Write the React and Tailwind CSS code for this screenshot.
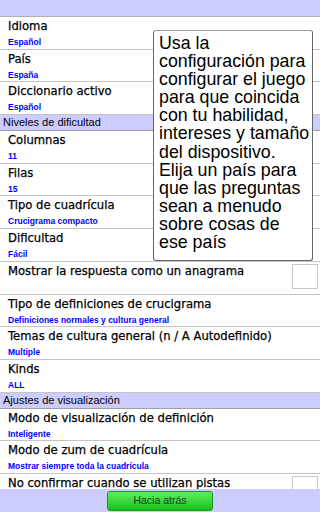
import React from "react";

const rowsA = [
  { t: "Idioma", s: "Español" },
  { t: "País", s: "España" },
  { t: "Diccionario activo", s: "Español" },
];
const rowsB = [
  { t: "Columnas", s: "11" },
  { t: "Filas", s: "15" },
  { t: "Tipo de cuadrícula", s: "Crucigrama compacto" },
  { t: "Dificultad", s: "Fácil" },
  { t: "Mostrar la respuesta como un anagrama", c: true },
  { t: "Tipo de definiciones de crucigrama", s: "Definiciones normales y cultura general" },
  { t: "Temas de cultura general (n / A Autodefinido)", s: "Multiple" },
  { t: "Kinds", s: "ALL" },
];
const rowsC = [
  { t: "Modo de visualización de definición", s: "Inteligente" },
  { t: "Modo de zum de cuadrícula", s: "Mostrar siempre toda la cuadrícula" },
  { t: "No confirmar cuando se utilizan pistas", c: true },
];

function Row({ r }) {
  return (
    <div className="h-[32.7px] shrink-0 border-b border-[#c4c4c4] bg-white flex justify-between">
      <div className="pl-2 pt-[3px]">
        <div
          className="text-[11.6px] leading-[13px] text-black whitespace-nowrap [-webkit-text-stroke:0.25px_#000]"
          style={{ fontFamily: '"DejaVu Sans", sans-serif' }}
        >
          {r.t}
        </div>
        {r.s && (
          <div className="mt-[4px] text-[8.5px] leading-[10px] font-bold text-[#0000ff] whitespace-nowrap">{r.s}</div>
        )}
      </div>
      {r.c && <div className="mt-[2px] mr-[2px] w-[26px] h-[25px] border border-[#c8c8c8] bg-white shrink-0" />}
    </div>
  );
}

function Header({ t }) {
  return (
    <div className="h-[16px] shrink-0 border-b border-[#a0a0a0] bg-[#ccccff] pl-[3px] text-[11px] leading-[14px] text-black">
      {t}
    </div>
  );
}

export default function App() {
  const lines = [
    "Usa la",
    "configuración para",
    "configurar el juego",
    "para que coincida",
    "con tu habilidad,",
    "intereses y tamaño",
    "del dispositivo.",
    "Elija un país para",
    "que las preguntas",
    "sean a menudo",
    "sobre cosas de",
    "ese país",
  ];
  return (
    <div className="relative w-[320px] h-[512px] overflow-hidden bg-white flex flex-col" style={{ fontFamily: '"Liberation Sans", Arial, sans-serif' }}>
      <div className="h-[17px] shrink-0 bg-[#ccccff] border-b border-[#b0b0b0]" />
      <div className="flex-1 overflow-hidden flex flex-col">
        {rowsA.map((r, i) => <Row key={i} r={r} />)}
        <Header t="Niveles de dificultad" />
        {rowsB.map((r, i) => <Row key={i} r={r} />)}
        <Header t="Ajustes de visualización" />
        {rowsC.map((r, i) => <Row key={i} r={r} />)}
      </div>
      <div className="h-[23px] shrink-0 bg-[#ccccff] flex justify-center items-start pt-[2px]">
        <div className="w-[106px] h-[20px] rounded-[3px] border border-[#1f9a1f] bg-gradient-to-b from-[#5cf05c] to-[#0cc00c] flex items-center justify-center text-[10.5px] text-[#1f3d1f]">
          Hacia atrás
        </div>
      </div>
      <div className="absolute left-[153px] top-[30px] w-[160px] h-[231px] bg-white border border-[#666] border-t-[#999] rounded-[3px] pl-[5px] pt-[3px] text-[17.8px] leading-[18.1px] text-black">
        {lines.map((l, i) => (
          <div key={i} className="whitespace-nowrap">{l}</div>
        ))}
      </div>
    </div>
  );
}
